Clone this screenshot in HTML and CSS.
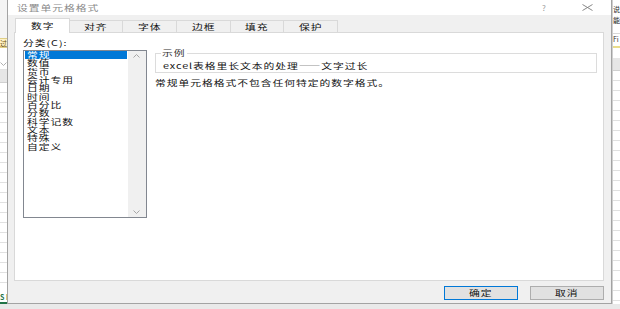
FILE: index.html
```html
<!DOCTYPE html>
<html lang="zh-CN">
<head>
    <meta charset="UTF-8">
    <meta name="viewport" content="width=device-width, initial-scale=1.0">
    <title>设置单元格格式</title>
    <link rel="stylesheet" href="styles.css">
</head>
<body>

    <div class="screen">
        <div class="sheet sheet-left">
            <div class="sheet-top"></div>
            <div class="cell-yellow">过</div>
            <div class="cell-blank"></div>
            <div class="cell-drop">
                <svg width="7" height="4" viewBox="0 0 7 4"><polyline points="0.5,0.5 3.5,3.5 6.5,0.5" fill="none" stroke="#b0b0b0" stroke-width="1"/></svg>
            </div>
            <div class="sheet-head"></div>
            <div class="sheet-rows"></div>
            <div class="sheet-tab">S I</div>
        </div>

        <div class="dialog">
            <div class="titlebar">
                <span class="title"><span class="w">设置单元格格式</span></span>
                <span class="help">?</span>
                <span class="close">
                    <svg width="11" height="7" viewBox="0 0 11 7"><path d="M0.5 0.5 L10.5 6.5 M10.5 0.5 L0.5 6.5" stroke="#7a7a7a" stroke-width="0.9" fill="none"/></svg>
                </span>
            </div>

            <div class="dialog-body">
                <div class="tabs">
                    <div class="tab active"><span class="w">数字</span></div>
                    <div class="tab"><span class="w">对齐</span></div>
                    <div class="tab"><span class="w">字体</span></div>
                    <div class="tab"><span class="w">边框</span></div>
                    <div class="tab"><span class="w">填充</span></div>
                    <div class="tab"><span class="w">保护</span></div>
                </div>

                <div class="panel">
                    <div class="category">
                        <div class="label"><span class="w">分类(C):</span></div>
                        <div class="listbox">
                            <ul class="items">
                                <li class="selected"><span class="w">常规</span></li>
                                <li><span class="w">数值</span></li>
                                <li><span class="w">货币</span></li>
                                <li><span class="w">会计专用</span></li>
                                <li><span class="w">日期</span></li>
                                <li><span class="w">时间</span></li>
                                <li><span class="w">百分比</span></li>
                                <li><span class="w">分数</span></li>
                                <li><span class="w">科学记数</span></li>
                                <li><span class="w">文本</span></li>
                                <li><span class="w">特殊</span></li>
                                <li><span class="w">自定义</span></li>
                            </ul>
                            <div class="scrollbar">
                                <svg width="7" height="4" viewBox="0 0 7 4"><polyline points="0.5,3.5 3.5,0.5 6.5,3.5" fill="none" stroke="#a6a6a6" stroke-width="1"/></svg>
                                <svg width="7" height="4" viewBox="0 0 7 4"><polyline points="0.5,0.5 3.5,3.5 6.5,0.5" fill="none" stroke="#a6a6a6" stroke-width="1"/></svg>
                            </div>
                        </div>
                    </div>

                    <div class="detail">
                        <fieldset class="sample">
                            <legend><span class="w">示例</span></legend>
                            <div class="sample-text"><span class="w">excel表格里长文本的处理——文字过长</span></div>
                        </fieldset>
                        <p class="desc"><span class="w">常规单元格格式不包含任何特定的数字格式。</span></p>
                    </div>
                </div>

                <div class="buttons">
                    <button class="primary"><span class="w">确定</span></button>
                    <button><span class="w">取消</span></button>
                </div>
            </div>
        </div>

        <div class="sheet sheet-right">
            <div class="cell-text">说</div>
            <div class="cell-text">能</div>
            <div class="cell-line"></div>
            <div class="cell-fi">Fi</div>
            <div class="cell-blank"></div>
            <div class="sheet-head"></div>
            <div class="sheet-rows"></div>
        </div>
    </div>

    <div class="sheet-bottom"></div>

</body>
</html>
```

FILE: styles.css
```css
* {
    box-sizing: border-box;
}

body {
    margin: 0;
    width: 620px;
    height: 309px;
    overflow: hidden;
    background-color: #e9e9e9;
    font-family: "Noto Sans CJK SC", "Noto Sans", sans-serif;
    font-size: 8px;
    letter-spacing: 0.7px;
    color: #111;
}

/* the captured dialog is stretched sideways, so its text is drawn wide */
.w {
    display: inline-block;
    white-space: nowrap;
    transform: scaleX(1.35);
    transform-origin: left center;
}

.screen {
    display: flex;
    height: 304px;
}

/* spreadsheet visible behind the dialog */
.sheet {
    width: 7px;
    background-color: #fff;
    overflow: hidden;
    display: flex;
    flex-direction: column;
    font-size: 7px;
    letter-spacing: 0;
    white-space: nowrap;
}

.sheet-top {
    height: 38px;
    background-color: #f4f4f4;
}

.cell-yellow {
    height: 10px;
    line-height: 9px;
    background-color: #fff2c6;
    border-top: 1px solid #e0cf86;
    border-bottom: 1px solid #e0cf86;
    color: #6b5410;
}

.cell-blank {
    height: 10px;
}

.cell-drop {
    height: 12px;
    display: flex;
    align-items: center;
    border-bottom: 1px solid #e2e2e2;
}

.sheet-head {
    height: 13px;
    background-color: #e6e6e6;
    border-bottom: 1px solid #d0d0d0;
}

.sheet-rows {
    flex: 1;
    background-image: repeating-linear-gradient(to bottom, #fff 0, #fff 9px, #e1e1e1 9px, #e1e1e1 10px);
}

.sheet-tab {
    height: 12px;
    line-height: 10px;
    color: #217346;
    font-weight: bold;
    border-bottom: 2px solid #217346;
}

.sheet-right {
    width: 8px;
    border-left: 1px solid #cfcfcf;
    padding-top: 4px;
}

.cell-text {
    height: 11px;
    line-height: 11px;
    color: #222;
    font-size: 7px;
}

.cell-line {
    height: 8px;
    border-bottom: 1px solid #d8d8d8;
}

.cell-fi {
    height: 14px;
    line-height: 11px;
    color: #333;
    border-bottom: 2px solid #e9dc8a;
}

.sheet-bottom {
    height: 5px;
    background-color: #e9e9e9;
}

/* dialog */
.dialog {
    width: 606px;
    height: 304px;
    border: 1px solid #a3a3a3;
    border-top: none;
    display: flex;
    flex-direction: column;
}

.titlebar {
    height: 15px;
    background-color: #fff;
    display: flex;
    align-items: center;
    padding-left: 9px;
}

.title {
    flex: 1;
    color: #8a8a8a;
    line-height: 15px;
}

.help {
    width: 8px;
    margin-right: 34px;
    text-align: center;
    color: #9a9a9a;
    font-size: 8px;
    letter-spacing: 0;
}

.close {
    width: 11px;
    height: 7px;
    margin-right: 18px;
    display: flex;
}

.dialog-body {
    flex: 1;
    background-color: #f0f0f0;
    padding: 3px 7px 0 6px;
    display: flex;
    flex-direction: column;
}

.tabs {
    display: flex;
    align-items: flex-end;
    height: 14px;
    margin-left: 1px;
}

.tab {
    width: 54.7px;
    height: 12px;
    margin-left: -1px;
    border: 1px solid #d9d9d9;
    border-bottom: none;
    background-color: #f0f0f0;
    text-align: center;
    line-height: 11px;
}

.tab .w,
button .w {
    transform-origin: center center;
}

.tab:first-child {
    margin-left: 0;
}

.tab.active {
    height: 15px;
    margin-bottom: -1px;
    background-color: #fff;
    line-height: 13px;
    position: relative;
    z-index: 1;
}

.panel {
    height: 249px;
    background-color: #fff;
    border: 1px solid #d9d9d9;
    display: flex;
    padding: 5px 6px 0 8px;
}

.label {
    line-height: 10px;
    height: 10px;
}

.listbox {
    width: 124px;
    height: 168px;
    margin-top: 2px;
    border: 1px solid #828790;
    display: flex;
}

.items {
    list-style: none;
    margin: 0;
    padding: 0 0 0 1px;
    width: 104px;
}

.items li {
    width: 102px;
    height: 8.33px;
    line-height: 8.33px;
    padding-left: 2px;
    white-space: nowrap;
}

.items li.selected {
    background-color: #0078d7;
    color: #fff;
}

.scrollbar {
    flex: 1;
    background-color: #f0f0f0;
    display: flex;
    flex-direction: column;
    align-items: center;
    justify-content: space-between;
    padding: 3px 0;
}

.detail {
    flex: 1;
    margin: 10px 0 0 8px;
}

.sample {
    margin: 0;
    padding: 0 8px 1px 5px;
    border: 1px solid #dcdcdc;
    min-width: 0;
}

.sample legend {
    width: 26px;
    padding: 0 1px;
    line-height: 10px;
    color: #333;
}

.sample-text {
    margin-top: 3px;
    line-height: 10px;
    padding-left: 2px;
}

.desc {
    margin: 5px 0 0;
    line-height: 10px;
}

.buttons {
    display: flex;
    justify-content: flex-end;
    gap: 12px;
    margin-top: 5px;
}

button {
    width: 74px;
    height: 14px;
    padding: 0;
    border: 1px solid #adadad;
    background-color: #e1e1e1;
    font-family: inherit;
    font-size: 8px;
    letter-spacing: 0.7px;
    line-height: 12px;
    color: #111;
}

button.primary {
    border-color: #0078d7;
}
```
